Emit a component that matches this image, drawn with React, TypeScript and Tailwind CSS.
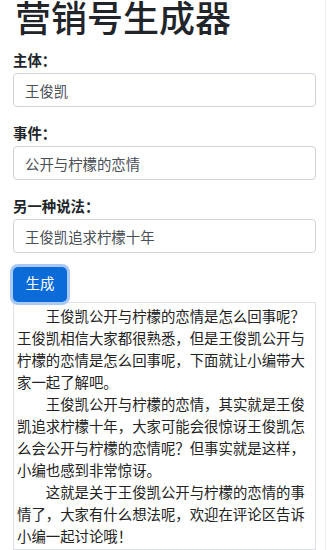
const fields = [
  { label: "主体：", value: "王俊凯" },
  { label: "事件：", value: "公开与柠檬的恋情" },
  { label: "另一种说法：", value: "王俊凯追求柠檬十年" },
];

const paragraphs = [
  "王俊凯公开与柠檬的恋情是怎么回事呢？王俊凯相信大家都很熟悉，但是王俊凯公开与柠檬的恋情是怎么回事呢，下面就让小编带大家一起了解吧。",
  "王俊凯公开与柠檬的恋情，其实就是王俊凯追求柠檬十年，大家可能会很惊讶王俊凯怎么会公开与柠檬的恋情呢？但事实就是这样，小编也感到非常惊讶。",
  "这就是关于王俊凯公开与柠檬的恋情的事情了，大家有什么想法呢，欢迎在评论区告诉小编一起讨论哦！",
];

const App = () => {
  return (
    <div
      className="w-[326px] min-h-[550px] bg-white border-r border-[#f0f0f0] text-[#212529]"
      style={{ fontFamily: '"Liberation Sans", "Noto Sans CJK SC", sans-serif' }}
    >
      <div className="pl-[13px] w-[316px]">
        <h1 className="text-[36px] leading-[40px] font-medium pl-[2px] mb-[10px]">
          营销号生成器
        </h1>

        {fields.map((field, index) => (
          <div key={index} className="mb-[16px]">
            <label className="block text-[14.4px] leading-[22px] font-bold mb-px">
              {field.label}
            </label>
            <input
              readOnly
              value={field.value}
              className="block w-full h-[34px] border border-[#ced4da] rounded-[4px] px-[11px] text-[14.4px] text-[#495057] outline-none"
            />
          </div>
        ))}

        <button className="mt-[-2px] h-[35px] w-[54px] rounded-[5px] bg-[#0b6bd8] text-white text-[14.4px] ring-[3px] ring-[#a9c9f5]">
          生成
        </button>

        <div className="border border-[#dee2e6] px-[3px] pt-[3px] pb-px text-[14.4px] leading-[22px] text-[#222]">
          {paragraphs.map((text, index) => (
            <p key={index} className="indent-[2em]">
              {text}
            </p>
          ))}
        </div>
      </div>
    </div>
  );
};

export default App;
